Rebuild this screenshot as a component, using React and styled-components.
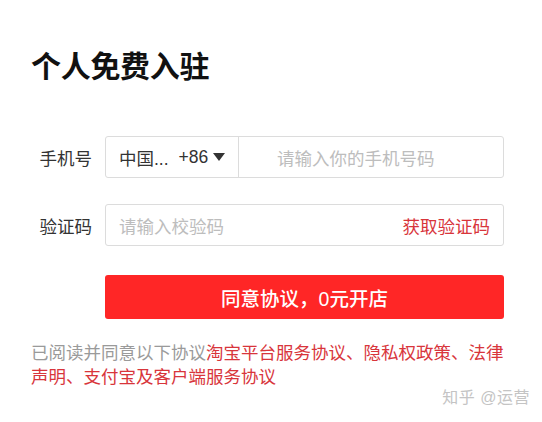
import React from 'react'
import styled, { createGlobalStyle } from 'styled-components'

const GlobalStyle = createGlobalStyle`
  html, body {
    margin: 0;
    padding: 0;
    background: #fff;
  }
  body {
    font-family: "Liberation Sans", "Noto Sans CJK SC", sans-serif;
    color: #333;
  }
`

const Page = styled.div`
  position: relative;
  width: 542px;
  height: 422px;
  padding: 52px 0 0 31px;
  box-sizing: border-box;
  overflow: hidden;
`

const Title = styled.h1`
  margin: 0 0 54px;
  font-size: 30px;
  line-height: 30px;
  font-weight: 700;
  color: #111;
  letter-spacing: -0.3px;
`

const Row = styled.div`
  display: flex;
  align-items: center;
  margin-bottom: ${(p) => p.gap || 26}px;
`

const Label = styled.label`
  width: 74px;
  padding-right: 13px;
  box-sizing: border-box;
  text-align: right;
  font-size: 17.5px;
  color: #333;
`

const Box = styled.div`
  display: flex;
  align-items: stretch;
  width: 399px;
  height: 42px;
  box-sizing: border-box;
  border: 1px solid #dcdcdc;
  border-radius: 3px;
  font-size: 17.5px;
`

const Country = styled.div`
  display: flex;
  align-items: center;
  width: 133px;
  padding-left: 13px;
  box-sizing: border-box;
  border-right: 1px solid #dcdcdc;
  color: #333;
`

const Code = styled.span`
  margin-left: 10px;
`

const Caret = styled.span`
  margin-left: 5px;
  width: 0;
  height: 0;
  border-left: 6px solid transparent;
  border-right: 6px solid transparent;
  border-top: 8px solid #333;
`

const Placeholder = styled.div`
  display: flex;
  align-items: center;
  flex: 1;
  padding-left: ${(p) => p.indent || 13}px;
  color: #bdbdbd;
`

const SendCode = styled.span`
  display: flex;
  align-items: center;
  padding-right: 13px;
  color: #d8353b;
`

const Submit = styled.button`
  margin-left: 74px;
  width: 399px;
  height: 44px;
  border: none;
  border-radius: 3px;
  background: #ff2626;
  color: #fff;
  font-family: inherit;
  font-size: 19.5px;
  font-weight: 500;
  cursor: pointer;
`

const Agreement = styled.p`
  margin: 22px 0 0;
  width: 476px;
  font-size: 17.5px;
  line-height: 24px;
  color: #9a9a9a;
`

const Link = styled.span`
  color: #d8353b;
`

const Watermark = styled.div`
  position: absolute;
  right: 12px;
  bottom: 14px;
  font-size: 16px;
  color: #c4c4c4;
  letter-spacing: 0.5px;
`

export default function App() {
  return (
    <Page>
      <GlobalStyle />
      <Title>个人免费入驻</Title>
      <Row>
        <Label>手机号</Label>
        <Box>
          <Country>
            中国...
            <Code>+86</Code>
            <Caret />
          </Country>
          <Placeholder indent={38}>请输入你的手机号码</Placeholder>
        </Box>
      </Row>
      <Row gap={29}>
        <Label>验证码</Label>
        <Box>
          <Placeholder>请输入校验码</Placeholder>
          <SendCode>获取验证码</SendCode>
        </Box>
      </Row>
      <Submit>同意协议，0元开店</Submit>
      <Agreement>
        已阅读并同意以下协议<Link>淘宝平台服务协议、隐私权政策、法律</Link>
        <br />
        <Link>声明、支付宝及客户端服务协议</Link>
      </Agreement>
      <Watermark>知乎 @运营</Watermark>
    </Page>
  )
}
